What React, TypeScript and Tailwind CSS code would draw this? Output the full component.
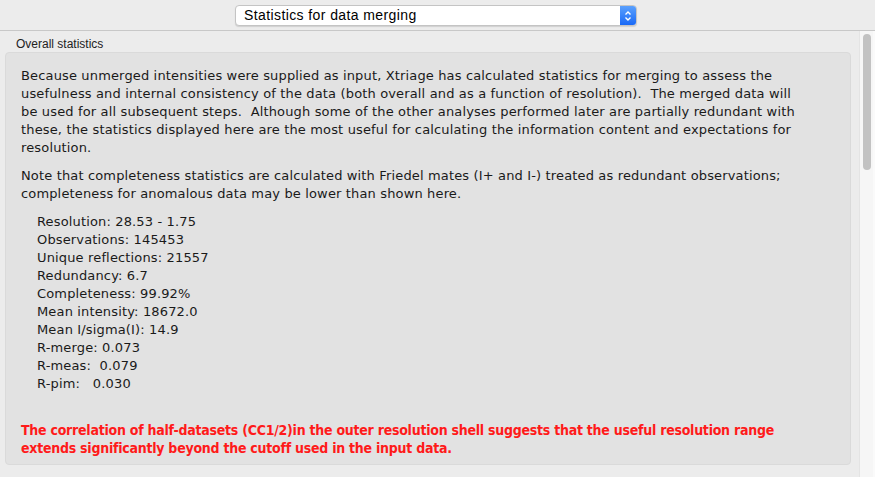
function App() {
  const intro = [
    'Because unmerged intensities were supplied as input, Xtriage has calculated statistics for merging to assess the',
    'usefulness and internal consistency of the data (both overall and as a function of resolution).\u00a0 The merged data will',
    'be used for all subsequent steps.\u00a0 Although some of the other analyses performed later are partially redundant with',
    'these, the statistics displayed here are the most useful for calculating the information content and expectations for',
    'resolution.',
  ];
  const note = [
    'Note that completeness statistics are calculated with Friedel mates (I+ and I-) treated as redundant observations;',
    'completeness for anomalous data may be lower than shown here.',
  ];
  const stats = [
    'Resolution: 28.53 - 1.75',
    'Observations: 145453',
    'Unique reflections: 21557',
    'Redundancy: 6.7',
    'Completeness: 99.92%',
    'Mean intensity: 18672.0',
    'Mean I/sigma(I): 14.9',
    'R-merge: 0.073',
    'R-meas:  0.079',
    'R-pim:   0.030',
  ];
  const warning = [
    'The correlation of half-datasets (CC1/2)in the outer resolution shell suggests that the useful resolution range',
    'extends significantly beyond the cutoff used in the input data.',
  ];

  return (
    <div className="w-[875px] h-[477px] overflow-hidden bg-[#ececec] flex flex-col font-['DejaVu_Sans',Verdana,sans-serif] text-[#1a1a1a]">
      <div className="h-[31px] shrink-0 flex justify-center items-start pt-[5px] border-b border-[#c8c8c8]">
        <div className="ml-[-3px] w-[402px] h-[21px] flex bg-white rounded-[4px] border border-[#c4c4c4] shadow-[0_1px_1px_rgba(0,0,0,0.12)] overflow-hidden">
          <div className="flex-1 pl-[8px] font-['Liberation_Sans',Arial,sans-serif] text-[14px] tracking-[0.4px] leading-[19px] text-black">Statistics for data merging</div>
          <div className="w-[16px] bg-gradient-to-b from-[#5aa0fd] to-[#1868f6] flex items-center justify-center">
            <svg width="8" height="12" viewBox="0 0 8 12" fill="none" stroke="white" strokeWidth="1.4">
              <path d="M1.5 4.5 L4 2 L6.5 4.5" />
              <path d="M1.5 7.5 L4 10 L6.5 7.5" />
            </svg>
          </div>
        </div>
      </div>
      <div className="flex-1 flex min-h-0">
        <div className="flex-1 pl-[5px] pr-[8px] pt-[7px]">
          <div className="font-['Liberation_Sans',Arial,sans-serif] text-[12px] leading-[13px] pl-[11px] text-[#222]">Overall statistics</div>
          <div className="mt-[1px] h-[413px] bg-[#e2e2e2] rounded-[4px] border border-[#dadada] pl-[15px] pt-[14px] text-[13px] tracking-[0.15px] leading-[18px] whitespace-nowrap">
            <div>
              {intro.map((l) => (
                <div key={l}>{l}</div>
              ))}
            </div>
            <div className="mt-[10px]">
              {note.map((l) => (
                <div key={l}>{l}</div>
              ))}
            </div>
            <div className="mt-[10px] pl-[16px]">
              {stats.map((s) => (
                <div key={s} className="whitespace-pre">{s}</div>
              ))}
            </div>
            <div className="mt-[28px] text-[#ff1a1a] font-bold text-[14px] font-['DejaVu_Sans_Condensed','DejaVu_Sans',sans-serif] tracking-[-0.25px]">
              {warning.map((l) => (
                <div key={l}>{l}</div>
              ))}
            </div>
          </div>
        </div>
        <div className="w-[14px] bg-[#f6f6f6] border-l border-[#e4e4e4] pt-[3px] flex justify-center">
          <div className="w-[8px] h-[136px] rounded-full bg-[#c2c2c2]" />
        </div>
        <div className="w-[2px] bg-[#fafafa]" />
      </div>
    </div>
  );
}

export default App;
